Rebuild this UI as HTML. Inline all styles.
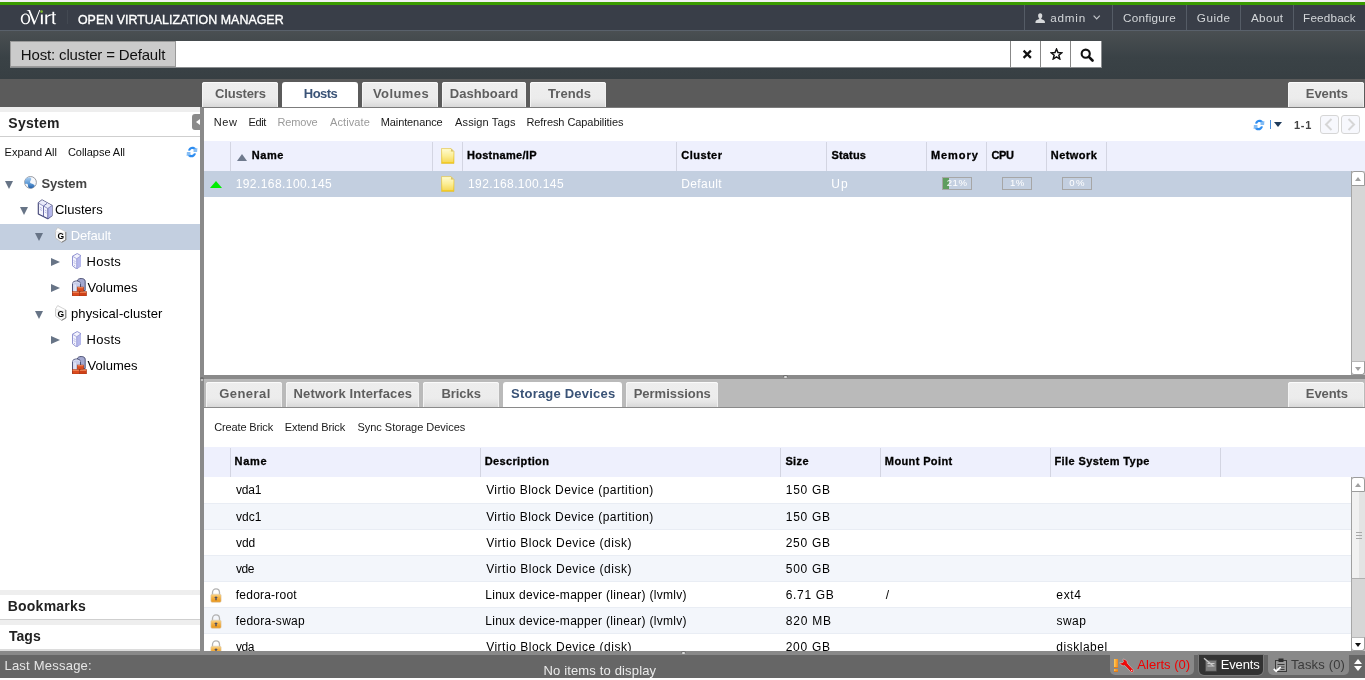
<!DOCTYPE html>
<html>
<head>
<meta charset="utf-8">
<title>oVirt Open Virtualization Manager</title>
<style>
*{box-sizing:border-box;margin:0;padding:0}
html,body{width:1365px;height:680px;overflow:hidden;background:#fff;font-family:"Liberation Sans",sans-serif;font-size:12px;color:#000}
.abs{position:absolute}
div,span{white-space:nowrap}
#all{position:absolute;left:0;top:0;width:1365px;height:680px;will-change:transform;overflow:hidden}
.hl{top:5px;height:25px;border-left:1px solid #555c66}
.sbtn{top:41px;width:30px;height:26px;background:#fff;border-left:1px solid #888}
.tab{height:25px;background:linear-gradient(#eeeeee,#ececec 65%,#e4e4e4 82%,#d8d8d8);border-radius:3px 3px 0 0;box-shadow:inset 0 1px 0 #fbfbfb,inset 1px 0 0 #f4f4f4,inset -1px 0 0 #f0f0f0}
.tab.act{background:#fff;box-shadow:none}
.tr{left:0;width:200px;height:26px}
.tri-d{width:0;height:0;border-left:4.750px solid transparent;border-right:4.750px solid transparent;border-top:8.500px solid #677486}
.tri-r{width:0;height:0;border-top:4.500px solid transparent;border-bottom:4.500px solid transparent;border-left:9px solid #677486}
.gh{background:#eef0fd}
.vd{width:1px;background:#d3d5e2}
</style>
</head>
<body>
<div id="all">
<div class="abs" style="left:0;top:0;width:1365px;height:2px;background:#f2f2f2"></div>
<div class="abs" style="left:0;top:2px;width:1365px;height:3px;background:#3a9b00"></div>
<div class="abs" style="left:0;top:5px;width:1365px;height:25px;background:#393e48"></div>
<div class="abs" style="left:0;top:30px;width:1365px;height:1px;background:#59616b"></div>
<div class="abs" style="left:0;top:31px;width:1365px;height:48px;background:linear-gradient(#4a4f52,#3a4246 55%,#373f43)"></div>
<div class="abs" style="left:0;top:79px;width:1365px;height:28px;background:#5b5b5b"></div>
<svg class="abs" style="left:15px;top:5px" width="50" height="25" viewBox="0 0 50 25"><path fill-rule="evenodd" d="M10.500 8.600c2.700 0 4.700 2.300 4.700 5.300s-2 5.300-4.700 5.300-4.700-2.300-4.700-5.300 2-5.300 4.700-5.300zm0 .9c-1.800 0-3 1.900-3 4.400s1.200 4.400 3 4.400 3-1.900 3-4.400-1.200-4.400-3-4.400z" fill="#fff"/><path d="M11.800 5h3.200l4.800 11.400L24.200 5h1.100l-5.700 14.400h-.9L13.600 6.300c-.3-.6-.8-.9-1.800-.9z" fill="#fff"/><circle cx="26.600" cy="6.600" r="1.300" fill="#7ab829"/><rect x="25.900" y="9.500" width="1.900" height="9.700" fill="#fff"/><rect x="30.300" y="9.500" width="1.900" height="9.700" fill="#fff"/><path d="M32.200 11.300c.9-1.500 2-2.100 3.300-1.800v1.500c-1.400-.3-2.500.4-3.300 1.700z" fill="#fff"/><rect x="37.400" y="6.800" width="1.800" height="10.800" fill="#fff"/><rect x="35.300" y="9.300" width="5.700" height=".9" fill="#fff"/><path d="M37.400 17c0 2 1.100 2.500 3.700 2v-.7c-1.500.3-1.900-.2-1.900-1.300z" fill="#fff"/></svg>
<div class="abs" style="left:67px;top:10px;width:1px;height:14px;background:#434952"></div>
<span class="abs" style="left:77.94px;top:13px;font-size:12.4px;line-height:14px;color:#fff;letter-spacing:0.037px;-webkit-text-stroke:0.35px #fff;">OPEN VIRTUALIZATION MANAGER</span>
<div class="abs hl" style="left:1024px;width:88px"><svg class="abs" style="left:9.900px;top:7.500px" width="10.400" height="10.400" viewBox="0 0 11 11" preserveAspectRatio="none"><path d="M5.500 0.300C3.900 0.300 3.300 1.500 3.300 2.800c0 1.200.5 2.300 1.100 2.800v.8C3 6.900.6 7.500.5 9.300v1.400h10V9.300c-.1-1.800-2.500-2.400-3.900-2.900v-.8c.6-.5 1.100-1.600 1.100-2.800C7.700 1.500 7.100.3 5.500.3z" fill="#d6d8da"/></svg><svg class="abs" style="left:68.300px;top:9.700px" width="7.400" height="5" viewBox="0 0 7.400 5"><path d="M.6.600l3.100 3.200L6.800.6" stroke="#c4c7cb" stroke-width="1.200" fill="none"/></svg></div>
<div class="abs hl" style="left:1112px;width:74px"></div>
<div class="abs hl" style="left:1186px;width:54px"></div>
<div class="abs hl" style="left:1240px;width:53px"></div>
<div class="abs hl" style="left:1293px;width:72px"></div>
<span class="abs" style="left:1050.30px;top:11px;font-size:11.7px;line-height:13px;color:#d4d7da;letter-spacing:0.759px;">admin</span>
<span class="abs" style="left:1122.97px;top:11px;font-size:11.7px;line-height:13px;color:#d4d7da;letter-spacing:0.255px;">Configure</span>
<span class="abs" style="left:1196.84px;top:11px;font-size:11.7px;line-height:13px;color:#d4d7da;letter-spacing:0.494px;">Guide</span>
<span class="abs" style="left:1250.94px;top:11px;font-size:11.7px;line-height:13px;color:#d4d7da;letter-spacing:0.391px;">About</span>
<span class="abs" style="left:1303.06px;top:11px;font-size:11.7px;line-height:13px;color:#d4d7da;letter-spacing:0.189px;">Feedback</span>
<div class="abs" style="left:10px;top:41px;width:1092px;height:27px;background:#8b8e90"></div>
<div class="abs" style="left:10px;top:41px;width:166px;height:26px;background:#cbcbcb;border:1px solid #9a9a9a"></div>
<span class="abs" style="left:20.85px;top:46px;font-size:15px;line-height:17px;color:#111;letter-spacing:-0.156px;">Host: cluster = Default</span>
<div class="abs" style="left:176px;top:41px;width:834px;height:26px;background:#fff"></div>
<div class="abs sbtn" style="left:1010px"><svg class="abs" style="left:11px;top:8px" width="11" height="11" viewBox="0 0 11 11"><path d="M1.600 1.600l7.300 7.300M8.900 1.600l-7.300 7.300" stroke="#111" stroke-width="2.200" fill="none"/></svg></div>
<div class="abs sbtn" style="left:1040px"><svg class="abs" style="left:9px;top:6.500px" width="13" height="12.130" viewBox="0 0 15 14"><path d="M7.500 1.200l1.700 4.100 4.400.3-3.400 2.800 1.100 4.300-3.800-2.400-3.800 2.400 1.100-4.300L1.400 5.600l4.400-.3z" stroke="#111" stroke-width="1.700" fill="none" stroke-linejoin="miter"/></svg></div>
<div class="abs sbtn" style="left:1070px;width:31px"><svg class="abs" style="left:9px;top:6.500px" width="14.500" height="14.500" viewBox="0 0 16 16"><circle cx="6.300" cy="6.300" r="4.500" stroke="#111" stroke-width="2.300" fill="none"/><path d="M9.800 9.800l4 4" stroke="#111" stroke-width="2.900" stroke-linecap="round"/></svg></div>
<div class="abs tab" style="left:202px;top:82px;width:76px"></div>
<span class="abs" style="left:214.94px;top:86px;font-size:13px;line-height:15px;font-weight:bold;color:#5e5e5e;letter-spacing:-0.148px;">Clusters</span>
<div class="abs tab act" style="left:282px;top:82px;width:76px"></div>
<span class="abs" style="left:303.82px;top:86px;font-size:13px;line-height:15px;font-weight:bold;color:#3a5377;letter-spacing:-0.572px;">Hosts</span>
<div class="abs tab" style="left:362px;top:82px;width:76px"></div>
<span class="abs" style="left:372.88px;top:86px;font-size:13px;line-height:15px;font-weight:bold;color:#5e5e5e;letter-spacing:0.440px;">Volumes</span>
<div class="abs tab" style="left:442px;top:82px;width:84px"></div>
<span class="abs" style="left:449.72px;top:86px;font-size:13px;line-height:15px;font-weight:bold;color:#5e5e5e;letter-spacing:0.084px;">Dashboard</span>
<div class="abs tab" style="left:530px;top:82px;width:76px"></div>
<span class="abs" style="left:548.08px;top:86px;font-size:13px;line-height:15px;font-weight:bold;color:#5e5e5e;letter-spacing:0.052px;">Trends</span>
<div class="abs tab" style="left:1288px;top:82px;width:76px"></div>
<span class="abs" style="left:1305.82px;top:86px;font-size:13px;line-height:15px;font-weight:bold;color:#5e5e5e;letter-spacing:-0.078px;">Events</span>
<div class="abs" style="left:0;top:107px;width:200px;height:545px;background:#fff"></div>
<div class="abs" style="left:0;top:107px;width:200px;height:5px;background:#eeeeee"></div>
<span class="abs" style="left:8.36px;top:115px;font-size:14px;line-height:16px;font-weight:bold;color:#222;letter-spacing:0.240px;">System</span>
<div class="abs" style="left:0;top:136px;width:200px;height:1px;background:#cfcfcf"></div>
<div class="abs" style="left:192px;top:114px;width:8px;height:16px;background:#8a8a8a;border-radius:3px 0 0 3px"><div class="abs" style="left:3.500px;top:4.500px;width:0;height:0;border-top:3.500px solid transparent;border-bottom:3.500px solid transparent;border-right:4px solid #fff"></div></div>
<span class="abs" style="left:4.62px;top:146px;font-size:11px;line-height:12px;color:#111;letter-spacing:0.047px;">Expand All</span>
<span class="abs" style="left:67.94px;top:146px;font-size:11px;line-height:12px;color:#111;letter-spacing:-0.035px;">Collapse All</span>
<svg class="abs" style="left:185.5px;top:146.4px" width="12" height="12" viewBox="0 0 12 12"><g id="rf"><path d="M2 4.600C2.500 2 4.800.4 7.100.7c1.400.2 2.400.9 3 1.900L8.500 4C8 3.300 7.300 3 6.400 3 5.300 3 4.500 3.600 4.100 4.700z" fill="#2d8cf0"/><path d="M7.600 2.900l3.800-.8-.3 4-3.600-.1z" fill="#86bdf4"/></g><g transform="rotate(180 6 6)"><path d="M2 4.600C2.500 2 4.800.4 7.100.7c1.400.2 2.400.9 3 1.900L8.500 4C8 3.300 7.300 3 6.400 3 5.300 3 4.500 3.600 4.100 4.700z" fill="#2d8cf0"/><path d="M7.600 2.900l3.800-.8-.3 4-3.600-.1z" fill="#86bdf4"/></g></svg>
<div class="abs tr" style="top:172px">
<div class="abs tri-d" style="left:5px;top:8.500px"></div>
</div>
<svg class="abs" style="left:24px;top:176px" width="13" height="13" viewBox="0 0 13 13"><defs><linearGradient id="gl" x1="0" y1="0" x2="0" y2="1"><stop offset="0" stop-color="#a9cdf0"/><stop offset=".55" stop-color="#5e9ad6"/><stop offset="1" stop-color="#235fa8"/></linearGradient></defs><circle cx="6.500" cy="6.400" r="5.900" fill="#f6f8fc" stroke="#8d9199" stroke-width=".9"/><path d="M2.200 2.600C4 1 6.600 1 7.200 2.400 7.700 3.900 5.600 4.900 6.100 6.400c.5 1.400 3.500 1 4.600 3-.6 1.800-2.400 3-4.400 2.900-1.500-.2-2.500-1.400-2.300-2.900C4.200 7.900 2.600 7.400 1.200 8 .3 6.100.7 4 2.200 2.600z" fill="url(#gl)"/></svg>
<span class="abs" style="left:41.42px;top:176px;font-size:13px;line-height:15px;font-weight:bold;color:#444;letter-spacing:-0.132px;">System</span>
<div class="abs tr" style="top:198px">
<div class="abs tri-d" style="left:19.5px;top:8.500px"></div>
</div>
<svg class="abs" style="left:37px;top:199px" width="16" height="21" viewBox="0 0 16 21"><path d="M1.300 4L5 1l10 5.500v10L10.800 19.800 1.300 15z" fill="#f5f5fd" stroke="#3f4274" stroke-width="1.100" stroke-linejoin="round"/><path d="M1.300 4L5 1l10 5.500-4.200 3z" fill="#e9eafa"/><path d="M10.800 9.500L15 6.500v10l-4.200 3.300z" fill="#b4b6ea"/><path d="M10.800 9.500v10.300M6.500 7v10.500M6.500 7l3.500-2.600" stroke="#5a5d9e" stroke-width=".9" fill="none"/><path d="M1.300 4l9.500 5.500L15 6.500" stroke="#6a6da8" stroke-width=".7" fill="none"/><path d="M2.800 8.300l2.200 1.200M2.800 10.300l2.200 1.200M7.800 11l1.800 1M7.800 13l1.800 1" stroke="#aeb0e0" stroke-width=".9"/></svg>
<span class="abs" style="left:54.91px;top:202px;font-size:13px;line-height:15px;color:#000;letter-spacing:0.014px;">Clusters</span>
<div class="abs tr" style="top:224px;background:#c3cfe0">
<div class="abs tri-d" style="left:35px;top:8.500px"></div>
</div>
<svg class="abs" style="left:55px;top:227.3px" width="12" height="16" viewBox="0 0 12 16"><path d="M2.700 .8L.4 4.400V11l6.200 4.300 4.200-2.300V5z" fill="#f7f7f7" stroke="#b9b9b9" stroke-width=".8" stroke-linejoin="round"/><path d="M2.700 .8L10.800 5 9 6.300.4 4.400z" fill="#ffffff" stroke="#c8c8c8" stroke-width=".5"/><path d="M6.600 15.300l4.200-2.300V5" fill="none" stroke="#7c7c7c" stroke-width="1"/><text x="2.500" y="12" font-family="Liberation Sans, sans-serif" font-size="8.500" font-weight="bold" fill="#000">G</text></svg>
<span class="abs" style="left:70.74px;top:228px;font-size:13px;line-height:15px;color:#fff;letter-spacing:-0.150px;">Default</span>
<div class="abs tr" style="top:250px">
<div class="abs tri-r" style="left:51px;top:8px"></div>
</div>
<svg class="abs" style="left:71.8px;top:252.8px" width="9.500" height="16.500" viewBox="0 0 9.500 16.500"><path d="M.5 3.200L5.200.5l3.800 2.200v10L4.700 16 .5 12.800z" fill="#f3f3fd" stroke="#8789cc" stroke-width=".9" stroke-linejoin="round"/><path d="M4.700 5.700L9 2.700v10L4.700 16z" fill="#b6b8ec"/><path d="M.5 3.200l4.200 2.500L9 2.700M4.700 5.700V16" stroke="#8d8fd0" stroke-width=".7" fill="none"/><path d="M1.700 7.600l1.800 1M1.700 9.600l1.800 1" stroke="#b0b2e2" stroke-width=".9"/><circle cx="2.500" cy="12.600" r=".5" fill="#a0a2d8"/></svg>
<span class="abs" style="left:86.54px;top:254px;font-size:13px;line-height:15px;color:#000;letter-spacing:0.253px;">Hosts</span>
<div class="abs tr" style="top:276px">
<div class="abs tri-r" style="left:51px;top:8px"></div>
</div>
<svg class="abs" style="left:71.8px;top:277.8px" width="15" height="18.500" viewBox="0 0 15 18.500"><path d="M5.200 3.200C5.200 1.500 7 .5 9.200.5s4 1 4 2.700v9.300h-8z" fill="#a4a9d0" stroke="#40446a" stroke-width=".9"/><path d="M.5 5.700c0-1.700 1.800-2.700 4-2.700s4 1 4 2.700v11.500h-8z" fill="#c6cbe8" stroke="#40446a" stroke-width=".9"/><path d="M2 6.500v9M3.300 6.500v9" stroke="#f3f5fc" stroke-width=".8"/><path d="M.8 5.900C1.500 4.600 3 4 4.500 4s3 .6 3.700 1.900" stroke="#e4e7f6" stroke-width=".8" fill="none"/><rect x="5.200" y="9" width="6.500" height="4.200" fill="#dc4b1f" stroke="#9a2c0b" stroke-width=".5"/><rect x=".3" y="13.600" width="7" height="4.400" fill="#dc4b1f" stroke="#9a2c0b" stroke-width=".5"/><rect x="7.600" y="13.600" width="7" height="4.400" fill="#cf4118" stroke="#9a2c0b" stroke-width=".5"/><path d="M5.600 9.700h5.700M.7 14.300h6.200M8 14.300h6.200" stroke="#f39467" stroke-width=".9"/></svg>
<span class="abs" style="left:87.54px;top:280px;font-size:13px;line-height:15px;color:#000;letter-spacing:0.031px;">Volumes</span>
<div class="abs tr" style="top:302px">
<div class="abs tri-d" style="left:35px;top:8.500px"></div>
</div>
<svg class="abs" style="left:55px;top:305.3px" width="12" height="16" viewBox="0 0 12 16"><path d="M2.700 .8L.4 4.400V11l6.200 4.300 4.200-2.300V5z" fill="#f7f7f7" stroke="#b9b9b9" stroke-width=".8" stroke-linejoin="round"/><path d="M2.700 .8L10.800 5 9 6.300.4 4.400z" fill="#ffffff" stroke="#c8c8c8" stroke-width=".5"/><path d="M6.600 15.300l4.200-2.300V5" fill="none" stroke="#7c7c7c" stroke-width="1"/><text x="2.500" y="12" font-family="Liberation Sans, sans-serif" font-size="8.500" font-weight="bold" fill="#000">G</text></svg>
<span class="abs" style="left:70.99px;top:306px;font-size:13px;line-height:15px;color:#000;letter-spacing:0.116px;">physical-cluster</span>
<div class="abs tr" style="top:328px">
<div class="abs tri-r" style="left:51px;top:8px"></div>
</div>
<svg class="abs" style="left:71.8px;top:330.8px" width="9.500" height="16.500" viewBox="0 0 9.500 16.500"><path d="M.5 3.200L5.200.5l3.800 2.200v10L4.700 16 .5 12.800z" fill="#f3f3fd" stroke="#8789cc" stroke-width=".9" stroke-linejoin="round"/><path d="M4.700 5.700L9 2.700v10L4.700 16z" fill="#b6b8ec"/><path d="M.5 3.200l4.200 2.500L9 2.700M4.700 5.700V16" stroke="#8d8fd0" stroke-width=".7" fill="none"/><path d="M1.700 7.600l1.800 1M1.700 9.600l1.800 1" stroke="#b0b2e2" stroke-width=".9"/><circle cx="2.500" cy="12.600" r=".5" fill="#a0a2d8"/></svg>
<span class="abs" style="left:86.54px;top:332px;font-size:13px;line-height:15px;color:#000;letter-spacing:0.253px;">Hosts</span>
<div class="abs tr" style="top:354px">
</div>
<svg class="abs" style="left:71.8px;top:355.8px" width="15" height="18.500" viewBox="0 0 15 18.500"><path d="M5.200 3.200C5.200 1.500 7 .5 9.200.5s4 1 4 2.700v9.300h-8z" fill="#a4a9d0" stroke="#40446a" stroke-width=".9"/><path d="M.5 5.700c0-1.700 1.800-2.700 4-2.700s4 1 4 2.700v11.500h-8z" fill="#c6cbe8" stroke="#40446a" stroke-width=".9"/><path d="M2 6.500v9M3.300 6.500v9" stroke="#f3f5fc" stroke-width=".8"/><path d="M.8 5.900C1.500 4.600 3 4 4.500 4s3 .6 3.700 1.900" stroke="#e4e7f6" stroke-width=".8" fill="none"/><rect x="5.200" y="9" width="6.500" height="4.200" fill="#dc4b1f" stroke="#9a2c0b" stroke-width=".5"/><rect x=".3" y="13.600" width="7" height="4.400" fill="#dc4b1f" stroke="#9a2c0b" stroke-width=".5"/><rect x="7.600" y="13.600" width="7" height="4.400" fill="#cf4118" stroke="#9a2c0b" stroke-width=".5"/><path d="M5.600 9.700h5.700M.7 14.300h6.200M8 14.300h6.200" stroke="#f39467" stroke-width=".9"/></svg>
<span class="abs" style="left:87.54px;top:358px;font-size:13px;line-height:15px;color:#000;letter-spacing:0.031px;">Volumes</span>
<div class="abs" style="left:0;top:590px;width:200px;height:5px;background:#eeeeee"></div>
<span class="abs" style="left:7.76px;top:598px;font-size:14px;line-height:16px;font-weight:bold;color:#222;letter-spacing:0.219px;">Bookmarks</span>
<div class="abs" style="left:0;top:619px;width:200px;height:1px;background:#cfcfcf"></div>
<div class="abs" style="left:0;top:620px;width:200px;height:5px;background:#eeeeee"></div>
<span class="abs" style="left:8.91px;top:628px;font-size:14px;line-height:16px;font-weight:bold;color:#222;letter-spacing:0.042px;">Tags</span>
<div class="abs" style="left:0;top:649px;width:200px;height:2px;background:#dcdcdc"></div>
<div class="abs" style="left:200px;top:107px;width:4px;height:545px;background:#8a8a8a"></div>
<div class="abs" style="left:202px;top:107px;width:1163px;height:1px;background:#7c7c7c"></div>
<span class="abs" style="left:213.72px;top:116px;font-size:11px;line-height:12px;color:#1a1a1a;letter-spacing:0.588px;">New</span>
<span class="abs" style="left:248.62px;top:116px;font-size:11px;line-height:12px;color:#1a1a1a;letter-spacing:-0.433px;">Edit</span>
<span class="abs" style="left:277.62px;top:116px;font-size:11px;line-height:12px;color:#9a9a9a;letter-spacing:-0.185px;">Remove</span>
<span class="abs" style="left:329.94px;top:116px;font-size:11px;line-height:12px;color:#9a9a9a;letter-spacing:0.120px;">Activate</span>
<span class="abs" style="left:380.72px;top:116px;font-size:11px;line-height:12px;color:#1a1a1a;letter-spacing:-0.103px;">Maintenance</span>
<span class="abs" style="left:455.04px;top:116px;font-size:11px;line-height:12px;color:#1a1a1a;letter-spacing:0.131px;">Assign Tags</span>
<span class="abs" style="left:526.42px;top:116px;font-size:11px;line-height:12px;color:#1a1a1a;letter-spacing:-0.073px;">Refresh Capabilities</span>
<svg class="abs" style="left:1252.5px;top:118.5px" width="12" height="12" viewBox="0 0 12 12"><g id="rf"><path d="M2 4.600C2.500 2 4.800.4 7.100.7c1.400.2 2.400.9 3 1.900L8.500 4C8 3.300 7.300 3 6.400 3 5.300 3 4.500 3.600 4.100 4.700z" fill="#2d8cf0"/><path d="M7.600 2.900l3.800-.8-.3 4-3.600-.1z" fill="#86bdf4"/></g><g transform="rotate(180 6 6)"><path d="M2 4.600C2.500 2 4.800.4 7.100.7c1.400.2 2.400.9 3 1.900L8.500 4C8 3.300 7.300 3 6.400 3 5.300 3 4.500 3.600 4.100 4.700z" fill="#2d8cf0"/><path d="M7.600 2.900l3.800-.8-.3 4-3.600-.1z" fill="#86bdf4"/></g></svg>
<div class="abs" style="left:1270px;top:120px;width:1px;height:9px;background:#4a8fdc"></div>
<div class="abs" style="left:1273.500px;top:122px;width:0;height:0;border-left:4px solid transparent;border-right:4px solid transparent;border-top:5.500px solid #1e3a5a"></div>
<span class="abs" style="left:1294.01px;top:119px;font-size:11px;line-height:12px;font-weight:bold;color:#444;letter-spacing:0.681px;">1-1</span>
<div class="abs" style="left:1320px;top:115px;width:19px;height:19px;border:1px solid #d6d6d6;border-radius:3px;background:#f7f8fd"><svg class="abs" style="left:-1px;top:-1px" width="19" height="19" viewBox="0 0 19 19"><path d="M11.500 4L6 9.500l5.500 5.500" stroke="#d6d6d6" stroke-width="2" fill="none"/></svg></div>
<div class="abs" style="left:1341px;top:115px;width:19px;height:19px;border:1px solid #d6d6d6;border-radius:3px;background:#f7f8fd"><svg class="abs" style="left:-1px;top:-1px" width="19" height="19" viewBox="0 0 19 19"><path d="M7.500 4L13 9.500 7.500 15" stroke="#d6d6d6" stroke-width="2" fill="none"/></svg></div>
<div class="abs gh" style="left:204px;top:141px;width:1161px;height:30px"></div>
<div class="abs vd" style="left:230px;top:142px;height:29px"></div>
<div class="abs vd" style="left:432px;top:142px;height:29px"></div>
<div class="abs vd" style="left:462px;top:142px;height:29px"></div>
<div class="abs vd" style="left:676px;top:142px;height:29px"></div>
<div class="abs vd" style="left:826px;top:142px;height:29px"></div>
<div class="abs vd" style="left:926px;top:142px;height:29px"></div>
<div class="abs vd" style="left:986px;top:142px;height:29px"></div>
<div class="abs vd" style="left:1046px;top:142px;height:29px"></div>
<div class="abs vd" style="left:1106px;top:142px;height:29px"></div>
<span class="abs" style="left:251.75px;top:149px;font-size:11px;line-height:12px;font-weight:bold;color:#000;letter-spacing:0.542px;-webkit-text-stroke:0.3px #000;">Name</span>
<span class="abs" style="left:466.95px;top:149px;font-size:11px;line-height:12px;font-weight:bold;color:#000;letter-spacing:0.290px;-webkit-text-stroke:0.3px #000;">Hostname/IP</span>
<span class="abs" style="left:681.36px;top:149px;font-size:11px;line-height:12px;font-weight:bold;color:#000;letter-spacing:0.448px;-webkit-text-stroke:0.3px #000;">Cluster</span>
<span class="abs" style="left:831.39px;top:149px;font-size:11px;line-height:12px;font-weight:bold;color:#000;letter-spacing:0.185px;-webkit-text-stroke:0.3px #000;">Status</span>
<span class="abs" style="left:930.95px;top:149px;font-size:11px;line-height:12px;font-weight:bold;color:#000;letter-spacing:0.945px;-webkit-text-stroke:0.3px #000;">Memory</span>
<span class="abs" style="left:991.46px;top:149px;font-size:11px;line-height:12px;font-weight:bold;color:#000;letter-spacing:-0.363px;-webkit-text-stroke:0.3px #000;">CPU</span>
<span class="abs" style="left:1050.75px;top:149px;font-size:11px;line-height:12px;font-weight:bold;color:#000;letter-spacing:0.452px;-webkit-text-stroke:0.3px #000;">Network</span>
<div class="abs" style="left:237px;top:154px;width:0;height:0;border-left:5px solid transparent;border-right:5px solid transparent;border-bottom:7px solid #6f7a8d"></div>
<svg class="abs" style="left:441px;top:148px" width="14" height="16" viewBox="0 0 14 16"><defs><linearGradient id="ng1" x1="0" y1="0" x2="0" y2="1"><stop offset="0" stop-color="#fffbc8"/><stop offset=".5" stop-color="#fbe875"/><stop offset="1" stop-color="#f2c81a"/></linearGradient></defs><path d="M.5.500h9.500l3 3V15.500H.5z" fill="url(#ng1)" stroke="#e0c040" stroke-width=".6"/><path d="M10 .5v3h3z" fill="#d9c36a"/><path d="M1.500 3h7M1.500 5h10.500M1.500 7h10.500M1.500 9h10.500M1.500 11h10.500M1.500 13h10.500" stroke="#fff" stroke-opacity=".6" stroke-width=".8"/></svg>
<div class="abs" style="left:204px;top:171px;width:1147px;height:26px;background:#c3cfe0"></div>
<div class="abs" style="left:210px;top:181px;width:0;height:0;border-left:6.500px solid transparent;border-right:6.500px solid transparent;border-bottom:7px solid #00ee00"></div>
<span class="abs" style="left:235.66px;top:177px;font-size:12px;line-height:14px;color:#fff;letter-spacing:0.429px;">192.168.100.145</span>
<svg class="abs" style="left:441px;top:176px" width="14" height="16" viewBox="0 0 14 16"><defs><linearGradient id="ng2" x1="0" y1="0" x2="0" y2="1"><stop offset="0" stop-color="#fffbc8"/><stop offset=".5" stop-color="#fbe875"/><stop offset="1" stop-color="#f2c81a"/></linearGradient></defs><path d="M.5.500h9.500l3 3V15.500H.5z" fill="url(#ng2)" stroke="#e0c040" stroke-width=".6"/><path d="M10 .5v3h3z" fill="#d9c36a"/><path d="M1.500 3h7M1.500 5h10.500M1.500 7h10.500M1.500 9h10.500M1.500 11h10.500M1.500 13h10.500" stroke="#fff" stroke-opacity=".6" stroke-width=".8"/></svg>
<span class="abs" style="left:468.06px;top:177px;font-size:12px;line-height:14px;color:#fff;letter-spacing:0.387px;">192.168.100.145</span>
<span class="abs" style="left:681.20px;top:177px;font-size:12px;line-height:14px;color:#fff;letter-spacing:0.410px;">Default</span>
<span class="abs" style="left:831.26px;top:177px;font-size:12px;line-height:14px;color:#fff;letter-spacing:1.162px;">Up</span>
<div class="abs" style="left:942px;top:177px;width:30px;height:13px;border:1px solid #a6a6a6"><div class="abs" style="left:0;top:0;width:6px;height:11px;background:#5f9d5f"></div></div>
<span class="abs" style="left:946.70px;top:177px;font-size:9.6px;line-height:11px;color:#fff;letter-spacing:0.512px;">21%</span>
<div class="abs" style="left:1002px;top:177px;width:30px;height:13px;border:1px solid #a6a6a6"></div>
<span class="abs" style="left:1010.05px;top:177px;font-size:9.6px;line-height:11px;color:#fff;letter-spacing:0.388px;">1%</span>
<div class="abs" style="left:1062px;top:177px;width:30px;height:13px;border:1px solid #a6a6a6"></div>
<span class="abs" style="left:1069.32px;top:177px;font-size:9.6px;line-height:11px;color:#fff;letter-spacing:1.312px;">0%</span>
<div class="abs" style="left:1351px;top:171px;width:14px;height:204px;background:#d6d6d6;border-left:1px solid #a6a6a6"></div>
<div class="abs" style="left:1351px;top:171px;width:14px;height:15px;border:1px solid #9c9c9c;border-radius:3px 3px 0 0;background:#fff"><div class="abs" style="left:3px;top:4.500px;width:0;height:0;border-left:3.500px solid transparent;border-right:3.500px solid transparent;border-bottom:4.500px solid #a0a0a0"></div></div>
<div class="abs" style="left:1351px;top:361px;width:14px;height:14px;border:1px solid #9c9c9c;border-top-color:#b8b8b8;border-radius:0 0 3px 3px;background:#fff"><div class="abs" style="left:3px;top:4.500px;width:0;height:0;border-left:3.500px solid transparent;border-right:3.500px solid transparent;border-top:4.500px solid #a0a0a0"></div></div>
<div class="abs" style="left:204px;top:375px;width:1161px;height:4px;background:#8a8a8a"></div>
<div class="abs" style="left:204px;top:379px;width:1161px;height:28px;background:#bababa"></div>
<div class="abs" style="left:782.500px;top:375px;width:5.500px;height:2px;background:#6e6e6e;border-radius:2px 2px 0 0"></div><div class="abs" style="left:784px;top:376.300px;width:3.200px;height:2px;background:#dadada;border-radius:1px"></div>
<div class="abs" style="left:200.300px;top:376.500px;width:3.400px;height:2.300px;background:#6e6e6e;border-radius:2px 2px 0 0"></div><div class="abs" style="left:200.500px;top:378.800px;width:2.800px;height:2px;background:#d4d4d4;border-radius:1px"></div>
<div class="abs" style="left:204px;top:407px;width:1161px;height:1px;background:#8a8a8a"></div>
<div class="abs tab" style="left:206px;top:382px;width:76px"></div>
<span class="abs" style="left:219.24px;top:386px;font-size:13px;line-height:15px;font-weight:bold;color:#5e5e5e;letter-spacing:0.444px;">General</span>
<div class="abs tab" style="left:286px;top:382px;width:133px"></div>
<span class="abs" style="left:293.62px;top:386px;font-size:13px;line-height:15px;font-weight:bold;color:#5e5e5e;letter-spacing:0.121px;">Network Interfaces</span>
<div class="abs tab" style="left:423px;top:382px;width:76px"></div>
<span class="abs" style="left:441.42px;top:386px;font-size:13px;line-height:15px;font-weight:bold;color:#5e5e5e;letter-spacing:-0.043px;">Bricks</span>
<div class="abs tab act" style="left:503px;top:382px;width:119px"></div>
<span class="abs" style="left:511.12px;top:386px;font-size:13px;line-height:15px;font-weight:bold;color:#3a5377;letter-spacing:0.204px;">Storage Devices</span>
<div class="abs tab" style="left:626px;top:382px;width:92px"></div>
<span class="abs" style="left:633.72px;top:386px;font-size:13px;line-height:15px;font-weight:bold;color:#5e5e5e;letter-spacing:-0.018px;">Permissions</span>
<div class="abs tab" style="left:1288px;top:382px;width:76px"></div>
<span class="abs" style="left:1305.82px;top:386px;font-size:13px;line-height:15px;font-weight:bold;color:#5e5e5e;letter-spacing:-0.078px;">Events</span>
<span class="abs" style="left:214.24px;top:421px;font-size:11px;line-height:12px;color:#1a1a1a;letter-spacing:-0.140px;">Create Brick</span>
<span class="abs" style="left:284.82px;top:421px;font-size:11px;line-height:12px;color:#1a1a1a;letter-spacing:-0.125px;">Extend Brick</span>
<span class="abs" style="left:357.40px;top:421px;font-size:11px;line-height:12px;color:#1a1a1a;letter-spacing:-0.014px;">Sync Storage Devices</span>
<div class="abs gh" style="left:204px;top:447px;width:1161px;height:30px"></div>
<div class="abs vd" style="left:230px;top:448px;height:29px"></div>
<div class="abs vd" style="left:480px;top:448px;height:29px"></div>
<div class="abs vd" style="left:780px;top:448px;height:29px"></div>
<div class="abs vd" style="left:880px;top:448px;height:29px"></div>
<div class="abs vd" style="left:1050px;top:448px;height:29px"></div>
<div class="abs vd" style="left:1220px;top:448px;height:29px"></div>
<span class="abs" style="left:234.55px;top:455px;font-size:11px;line-height:12px;font-weight:bold;color:#000;letter-spacing:0.675px;-webkit-text-stroke:0.3px #000;">Name</span>
<span class="abs" style="left:484.65px;top:455px;font-size:11px;line-height:12px;font-weight:bold;color:#000;letter-spacing:0.377px;-webkit-text-stroke:0.3px #000;">Description</span>
<span class="abs" style="left:785.39px;top:455px;font-size:11px;line-height:12px;font-weight:bold;color:#000;letter-spacing:0.396px;-webkit-text-stroke:0.3px #000;">Size</span>
<span class="abs" style="left:884.85px;top:455px;font-size:11px;line-height:12px;font-weight:bold;color:#000;letter-spacing:0.377px;-webkit-text-stroke:0.3px #000;">Mount Point</span>
<span class="abs" style="left:1054.45px;top:455px;font-size:11px;line-height:12px;font-weight:bold;color:#000;letter-spacing:0.391px;-webkit-text-stroke:0.3px #000;">File System Type</span>
<div class="abs" style="left:0;top:477px;width:1351px;height:174px;overflow:hidden">
<div class="abs" style="left:204px;top:0px;width:1147px;height:26px;background:#fff"></div>
<span class="abs" style="left:235.94px;top:6px;font-size:12px;line-height:14px;color:#000;letter-spacing:-0.192px;">vda1</span>
<span class="abs" style="left:486.14px;top:6px;font-size:12px;line-height:14px;color:#000;letter-spacing:0.447px;">Virtio Block Device (partition)</span>
<span class="abs" style="left:785.86px;top:6px;font-size:12px;line-height:14px;color:#000;letter-spacing:0.675px;">150 GB</span>
<div class="abs" style="left:204px;top:27px;width:1147px;height:25px;background:#f3f6fb"></div>
<div class="abs" style="left:204px;top:26px;width:1147px;height:1px;background:#e9edf4"></div>
<span class="abs" style="left:235.94px;top:33px;font-size:12px;line-height:14px;color:#000;letter-spacing:0.038px;">vdc1</span>
<span class="abs" style="left:486.14px;top:33px;font-size:12px;line-height:14px;color:#000;letter-spacing:0.447px;">Virtio Block Device (partition)</span>
<span class="abs" style="left:785.86px;top:33px;font-size:12px;line-height:14px;color:#000;letter-spacing:0.675px;">150 GB</span>
<div class="abs" style="left:204px;top:53px;width:1147px;height:25px;background:#fff"></div>
<div class="abs" style="left:204px;top:52px;width:1147px;height:1px;background:#e9edf4"></div>
<span class="abs" style="left:235.94px;top:59px;font-size:12px;line-height:14px;color:#000;letter-spacing:-0.050px;">vdd</span>
<span class="abs" style="left:486.14px;top:59px;font-size:12px;line-height:14px;color:#000;letter-spacing:0.516px;">Virtio Block Device (disk)</span>
<span class="abs" style="left:785.68px;top:59px;font-size:12px;line-height:14px;color:#000;letter-spacing:0.712px;">250 GB</span>
<div class="abs" style="left:204px;top:79px;width:1147px;height:25px;background:#f3f6fb"></div>
<div class="abs" style="left:204px;top:78px;width:1147px;height:1px;background:#e9edf4"></div>
<span class="abs" style="left:235.94px;top:85px;font-size:12px;line-height:14px;color:#000;letter-spacing:-0.425px;">vde</span>
<span class="abs" style="left:486.14px;top:85px;font-size:12px;line-height:14px;color:#000;letter-spacing:0.516px;">Virtio Block Device (disk)</span>
<span class="abs" style="left:785.80px;top:85px;font-size:12px;line-height:14px;color:#000;letter-spacing:0.688px;">500 GB</span>
<div class="abs" style="left:204px;top:105px;width:1147px;height:25px;background:#fff"></div>
<div class="abs" style="left:204px;top:104px;width:1147px;height:1px;background:#e9edf4"></div>
<svg class="abs" style="left:210.3px;top:110.9px" width="12" height="15" viewBox="0 0 12 15"><defs><linearGradient id="lk4" x1="0" y1="0" x2="0" y2="1"><stop offset="0" stop-color="#fbd58a"/><stop offset=".45" stop-color="#f4b040"/><stop offset="1" stop-color="#ea9416"/></linearGradient></defs><path d="M2.500 7V4.600C2.500 2.400 4 .9 6 .9s3.500 1.500 3.500 3.700V7" fill="none" stroke="#b2b2b2" stroke-width="1.300"/><rect x=".9" y="6.200" width="10.200" height="8" rx="1.200" fill="url(#lk4)" stroke="#d8c9ae" stroke-width=".6"/><path d="M6 8.200l1.900 1.900H6.700v2.200H5.300v-2.200H4.100z" fill="#4b4d63"/></svg>
<span class="abs" style="left:235.81px;top:111px;font-size:12px;line-height:14px;color:#000;letter-spacing:0.216px;">fedora-root</span>
<span class="abs" style="left:485.20px;top:111px;font-size:12px;line-height:14px;color:#000;letter-spacing:0.303px;">Linux device-mapper (linear) (lvmlv)</span>
<span class="abs" style="left:785.68px;top:111px;font-size:12px;line-height:14px;color:#000;letter-spacing:0.692px;">6.71 GB</span>
<span class="abs" style="left:885.70px;top:111px;font-size:12px;line-height:14px;color:#000;letter-spacing:0.000px;">/</span>
<span class="abs" style="left:1056.30px;top:111px;font-size:12px;line-height:14px;color:#000;letter-spacing:0.662px;">ext4</span>
<div class="abs" style="left:204px;top:131px;width:1147px;height:25px;background:#f3f6fb"></div>
<div class="abs" style="left:204px;top:130px;width:1147px;height:1px;background:#e9edf4"></div>
<svg class="abs" style="left:210.3px;top:136.9px" width="12" height="15" viewBox="0 0 12 15"><defs><linearGradient id="lk5" x1="0" y1="0" x2="0" y2="1"><stop offset="0" stop-color="#fbd58a"/><stop offset=".45" stop-color="#f4b040"/><stop offset="1" stop-color="#ea9416"/></linearGradient></defs><path d="M2.500 7V4.600C2.500 2.400 4 .9 6 .9s3.500 1.500 3.500 3.700V7" fill="none" stroke="#b2b2b2" stroke-width="1.300"/><rect x=".9" y="6.200" width="10.200" height="8" rx="1.200" fill="url(#lk5)" stroke="#d8c9ae" stroke-width=".6"/><path d="M6 8.200l1.900 1.900H6.700v2.200H5.300v-2.200H4.100z" fill="#4b4d63"/></svg>
<span class="abs" style="left:235.81px;top:137px;font-size:12px;line-height:14px;color:#000;letter-spacing:0.293px;">fedora-swap</span>
<span class="abs" style="left:485.20px;top:137px;font-size:12px;line-height:14px;color:#000;letter-spacing:0.303px;">Linux device-mapper (linear) (lvmlv)</span>
<span class="abs" style="left:785.80px;top:137px;font-size:12px;line-height:14px;color:#000;letter-spacing:0.770px;">820 MB</span>
<span class="abs" style="left:1056.42px;top:137px;font-size:12px;line-height:14px;color:#000;letter-spacing:0.525px;">swap</span>
<div class="abs" style="left:204px;top:157px;width:1147px;height:25px;background:#fff"></div>
<div class="abs" style="left:204px;top:156px;width:1147px;height:1px;background:#e9edf4"></div>
<svg class="abs" style="left:210.3px;top:162.9px" width="12" height="15" viewBox="0 0 12 15"><defs><linearGradient id="lk6" x1="0" y1="0" x2="0" y2="1"><stop offset="0" stop-color="#fbd58a"/><stop offset=".45" stop-color="#f4b040"/><stop offset="1" stop-color="#ea9416"/></linearGradient></defs><path d="M2.500 7V4.600C2.500 2.400 4 .9 6 .9s3.500 1.500 3.500 3.700V7" fill="none" stroke="#b2b2b2" stroke-width="1.300"/><rect x=".9" y="6.200" width="10.200" height="8" rx="1.200" fill="url(#lk6)" stroke="#d8c9ae" stroke-width=".6"/><path d="M6 8.200l1.900 1.900H6.700v2.200H5.300v-2.200H4.100z" fill="#4b4d63"/></svg>
<span class="abs" style="left:235.94px;top:163px;font-size:12px;line-height:14px;color:#000;letter-spacing:-0.456px;">vda</span>
<span class="abs" style="left:486.14px;top:163px;font-size:12px;line-height:14px;color:#000;letter-spacing:0.516px;">Virtio Block Device (disk)</span>
<span class="abs" style="left:785.68px;top:163px;font-size:12px;line-height:14px;color:#000;letter-spacing:0.712px;">200 GB</span>
<span class="abs" style="left:1056.30px;top:163px;font-size:12px;line-height:14px;color:#000;letter-spacing:0.516px;">disklabel</span>
</div>
<div class="abs" style="left:1351px;top:477px;width:14px;height:174px;background:#d6d6d6;border-left:1px solid #a6a6a6"></div>
<div class="abs" style="left:1351px;top:491px;width:14px;height:88px;background:linear-gradient(90deg,#f1f1f1 0,#f1f1f1 55%,#e3e3e3 55%,#e3e3e3);border-left:1px solid #a0a0a0;border-bottom:1px solid #b0b0b0"><div class="abs" style="left:4px;top:41px;width:6px;height:1px;background:#a8a8a8;box-shadow:0 3px 0 #a8a8a8,0 6px 0 #a8a8a8"></div></div>
<div class="abs" style="left:1351px;top:477px;width:14px;height:15px;border:1px solid #9c9c9c;border-radius:3px 3px 0 0;background:#fff"><div class="abs" style="left:3px;top:4.500px;width:0;height:0;border-left:3.500px solid transparent;border-right:3.500px solid transparent;border-bottom:4.500px solid #a0a0a0"></div></div>
<div class="abs" style="left:1351px;top:637px;width:14px;height:14px;border:1px solid #9c9c9c;border-top-color:#b8b8b8;border-radius:0 0 3px 3px;background:#fff"><div class="abs" style="left:3px;top:4.500px;width:0;height:0;border-left:3.500px solid transparent;border-right:3.500px solid transparent;border-top:4.500px solid #111"></div></div>
<div class="abs" style="left:0;top:651px;width:1365px;height:4px;background:#898989"></div>
<div class="abs" style="left:0;top:655px;width:1365px;height:23px;background:#666"></div>
<div class="abs" style="left:680.500px;top:651px;width:5.500px;height:2px;background:#6e6e6e;border-radius:2px 2px 0 0"></div><div class="abs" style="left:682px;top:652.300px;width:3.200px;height:2px;background:#dadada;border-radius:1px"></div>
<div class="abs" style="left:0;top:678px;width:1365px;height:2px;background:#fff"></div>
<span class="abs" style="left:4.44px;top:658px;font-size:13px;line-height:15px;color:#e6e6e6;letter-spacing:0.224px;">Last Message:</span>
<span class="abs" style="left:543.44px;top:663px;font-size:13px;line-height:15px;color:#ebebeb;letter-spacing:0.156px;">No items to display</span>
<div class="abs" style="left:1110px;top:654px;width:84px;height:21px;background:#898989;border-radius:0 0 5px 5px"></div>
<div class="abs" style="left:1114px;top:659px;width:4px;height:9px;background:linear-gradient(90deg,#ffcf5a,#fba834 50%,#ee8a22);border-bottom:1px solid #e07d1c"></div><div class="abs" style="left:1114px;top:669px;width:4px;height:3px;background:linear-gradient(90deg,#ffc64e,#f79a2a 50%,#ea8420);border-bottom:1px solid #df7c1c"></div>
<svg class="abs" style="left:1119px;top:657px" width="16" height="17" viewBox="0 0 16 17"><path d="M4.200 1.900L6 2.600C7.600 3.200 8.600 4.600 8.300 6.200l5.900 6.400c.8 1 .4 2.200-.6 2.600-.8.300-1.600 0-2.100-.6L5.800 8.600C4 9.200 2 8.400 1.200 6.800L.9 5.200 3 5.900 4.600 4.600 3.900 3.100z" fill="#ee0808" stroke="#b7c4c4" stroke-width=".7" stroke-linejoin="round"/><circle cx="12.700" cy="13.500" r=".7" fill="#fbd9d9"/></svg>
<span class="abs" style="left:1137.34px;top:657px;font-size:13px;line-height:15px;color:#f00000;letter-spacing:0.010px;">Alerts (0)</span>
<div class="abs" style="left:1199px;top:655px;width:64px;height:20px;background:#333;border-radius:0 0 5px 5px;box-shadow:0 0 0 1px #7a7a7a"></div>
<svg class="abs" style="left:1203px;top:657px" width="15" height="16" viewBox="0 0 15 16"><rect x="2.500" y="3.200" width="11" height="11" fill="#7d7d7d" stroke="#4a4a4a" stroke-width=".7"/><path d="M4.500 6.500h7M4.500 9h7" stroke="#cfcfcf" stroke-width="1"/><path d="M1 1.200l9 7.600" stroke="#c8c8c8" stroke-width="1.300"/></svg>
<span class="abs" style="left:1220.64px;top:657px;font-size:13px;line-height:15px;color:#fff;letter-spacing:-0.118px;">Events</span>
<div class="abs" style="left:1268px;top:654px;width:81px;height:21px;background:#898989;border-radius:0 0 5px 5px"></div>
<svg class="abs" style="left:1272px;top:657px" width="17" height="17" viewBox="0 0 17 17"><rect x="3.500" y="3.500" width="11" height="11" fill="#9a9a9a" stroke="#3a3a3a" stroke-width="1"/><rect x="6.500" y="1.500" width="5" height="3.500" fill="#2e2e2e"/><path d="M5.500 7.500h7M5.500 10h7M8.500 12.500h4" stroke="#3a3a3a" stroke-width="1"/><path d="M1.800 11.800l2.300 2.400 4.600-4.300" stroke="#fff" stroke-width="1.700" fill="none"/></svg>
<span class="abs" style="left:1290.89px;top:657px;font-size:13px;line-height:15px;color:#3a3a3a;letter-spacing:0.155px;">Tasks (0)</span>
<div class="abs" style="left:1354px;top:659px;width:0;height:0;border-left:4.500px solid transparent;border-right:4.500px solid transparent;border-bottom:5.500px solid #fff"></div>
<div class="abs" style="left:1354px;top:666px;width:0;height:0;border-left:4.500px solid transparent;border-right:4.500px solid transparent;border-top:5.500px solid #fff"></div>
</div>
</body>
</html>
